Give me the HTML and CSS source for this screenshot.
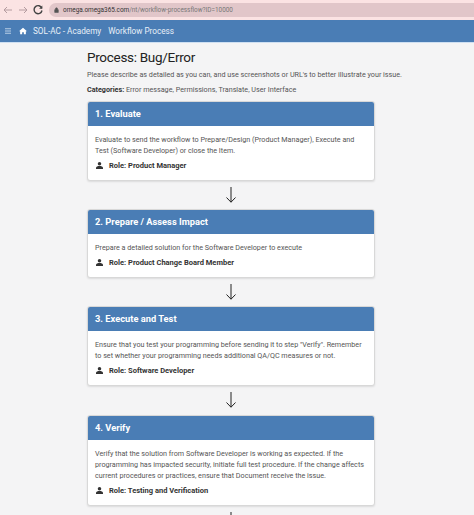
FILE: index.html
```html
<!DOCTYPE html>
<html lang="en">
<head>
    <meta charset="UTF-8">
    <meta name="viewport" content="width=device-width, initial-scale=1.0">
    <title>Workflow Process</title>
    <link rel="stylesheet" href="styles.css">
</head>
<body>

    <div class="browser-bar">
        <svg class="browser-icon" viewBox="0 0 12 12"><path d="M10 6H2M5 3 2 6l3 3" stroke="#b49ca0"/></svg>
        <svg class="browser-icon" viewBox="0 0 12 12"><path d="M2 6h8M7 3l3 3-3 3" stroke="#b49ca0"/></svg>
        <svg class="browser-icon" viewBox="0 0 12 12"><path d="M9.800 4.200A4 4 0 1 0 10 6.500" stroke="#444" stroke-width="1.400"/><path d="M10.300 1.500v3.200H7.100z" fill="#444"/></svg>
        <div class="url-pill">
            <svg class="lock" viewBox="0 0 8 10"><path d="M1 4.500h6V9H1zM2.300 4.500V3a1.700 1.700 0 0 1 3.400 0v1.500" fill="#555" stroke="#555"/></svg>
            <span class="url-host">omega.omega365.com</span><span class="url-path">/nt/workflow-processflow?ID=10000</span>
        </div>
    </div>

    <div class="navbar">
        <svg class="nav-menu" viewBox="0 0 8 8"><path d="M0 1h8M0 4h8M0 7h8" stroke="#dce8f5"/></svg>
        <svg class="nav-home" viewBox="0 0 12 11"><path d="M6 .5 0 6h1.700v4.500h3V7.500h2.600v3h3V6H12z" fill="#fff"/></svg>
        <span class="nav-link">SOL-AC - Academy</span>
        <span class="nav-link">Workflow Process</span>
    </div>

    <div class="content">
        <h1>Process: Bug/Error</h1>
        <p class="intro">Please describe as detailed as you can, and use screenshots or URL's to better illustrate your issue.</p>
        <p class="categories"><b>Categories:</b> Error message, Permissions, Translate, User Interface</p>

        <div class="step step-1">
            <div class="step-header">1. Evaluate</div>
            <div class="step-body">
                <p>Evaluate to send the workflow to Prepare/Design (Product Manager), Execute and Test (Software Developer) or close the Item.</p>
                <div class="role">
                    <svg class="role-icon" viewBox="0 0 8 8"><circle cx="4" cy="2" r="2" fill="#333"/><path d="M0 8V6.500C0 5 2 4.500 4 4.500s4 .5 4 2V8z" fill="#333"/></svg>
                    Role: Product Manager
                </div>
            </div>
        </div>
        <svg class="arrow" viewBox="0 0 10 16"><path d="M5 0v15.200M.5 10.500 5 15.200l4.500-4.700" stroke="#222" fill="none"/></svg>

        <div class="step step-2">
            <div class="step-header">2. Prepare / Assess Impact</div>
            <div class="step-body">
                <p>Prepare a detailed solution for the Software Developer to execute</p>
                <div class="role">
                    <svg class="role-icon" viewBox="0 0 8 8"><circle cx="4" cy="2" r="2" fill="#333"/><path d="M0 8V6.500C0 5 2 4.500 4 4.500s4 .5 4 2V8z" fill="#333"/></svg>
                    Role: Product Change Board Member
                </div>
            </div>
        </div>
        <svg class="arrow" viewBox="0 0 10 16"><path d="M5 0v15.200M.5 10.500 5 15.200l4.500-4.700" stroke="#222" fill="none"/></svg>

        <div class="step step-3">
            <div class="step-header">3. Execute and Test</div>
            <div class="step-body">
                <p>Ensure that you test your programming before sending it to step "Verify". Remember to set whether your programming needs additional QA/QC measures or not.</p>
                <div class="role">
                    <svg class="role-icon" viewBox="0 0 8 8"><circle cx="4" cy="2" r="2" fill="#333"/><path d="M0 8V6.500C0 5 2 4.500 4 4.500s4 .5 4 2V8z" fill="#333"/></svg>
                    Role: Software Developer
                </div>
            </div>
        </div>
        <svg class="arrow" viewBox="0 0 10 16"><path d="M5 0v15.200M.5 10.500 5 15.200l4.500-4.700" stroke="#222" fill="none"/></svg>

        <div class="step step-4">
            <div class="step-header">4. Verify</div>
            <div class="step-body">
                <p>Verify that the solution from Software Developer is working as expected. If the programming has impacted security, initiate full test procedure. If the change affects current procedures or practices, ensure that Document receive the issue.</p>
                <div class="role">
                    <svg class="role-icon" viewBox="0 0 8 8"><circle cx="4" cy="2" r="2" fill="#333"/><path d="M0 8V6.500C0 5 2 4.500 4 4.500s4 .5 4 2V8z" fill="#333"/></svg>
                    Role: Testing and Verification
                </div>
            </div>
        </div>
        <svg class="arrow" viewBox="0 0 10 16"><path d="M5 0v15.200M.5 10.500 5 15.200l4.500-4.700" stroke="#222" fill="none"/></svg>
    </div>

</body>
</html>
```

FILE: styles.css
```css
html, body {
    height: 515px;
    overflow: hidden;
}

body {
    font-family: Roboto, "Noto Sans", sans-serif;
    margin: 0;
    padding: 0;
    background-color: #f4f4f5;
    color: #555;
}

.browser-bar {
    display: flex;
    align-items: center;
    height: 20px;
    padding-left: 2px;
    gap: 3px;
    background-color: #fbe3e3;
    box-sizing: border-box;
}

.browser-icon {
    width: 12px;
    height: 12px;
    fill: none;
}

.url-pill {
    display: flex;
    align-items: center;
    flex: 1;
    height: 14px;
    margin-left: 2px;
    padding-left: 5px;
    border-radius: 7px 0 0 7px;
    background-color: #e1c6c9;
    font-size: 6.400px;
    white-space: nowrap;
}

.lock {
    width: 5px;
    height: 6px;
    margin-right: 4px;
}

.url-host {
    color: #333;
}

.url-path {
    color: #777;
}

.navbar {
    display: flex;
    align-items: center;
    height: 22px;
    padding-left: 5px;
    background-color: #4a7db5;
    border-bottom: 1px solid #cfe0f2;
    color: #e8f0f8;
    font-size: 8.200px;
}

.nav-menu {
    width: 6px;
    height: 6px;
    margin-right: 8px;
}

.nav-home {
    width: 8px;
    height: 8px;
    margin-right: 6px;
}

.nav-link {
    margin-right: 7px;
}

.content {
    width: 288px;
    margin-left: 87px;
}

h1 {
    margin: 4px 0 0;
    font-size: 13.500px;
    font-weight: 400;
    letter-spacing: -0.300px;
    line-height: 21px;
    color: #222;
}

.intro {
    margin: 1px 0 0;
    font-size: 7.200px;
    line-height: 12px;
    white-space: nowrap;
}

.categories {
    margin: 3px 0 0;
    font-size: 7.200px;
    line-height: 12px;
    white-space: nowrap;
}

.categories b {
    color: #333;
}

.step {
    background-color: #ffffff;
    border: 1px solid #d8d8d8;
    border-radius: 3px;
    box-shadow: 0 1px 2px rgba(0, 0, 0, 0.1);
    box-sizing: border-box;
    overflow: hidden;
}

.step-1 {
    margin-top: 5px;
}

.step-4 {
    margin-top: 7px;
}

.step-header {
    height: 24px;
    padding-left: 7px;
    background-color: #4a7db5;
    color: #fff;
    font-size: 9.300px;
    font-weight: 700;
    line-height: 23px;
}

.step-body {
    padding: 8px 7px 9px;
    font-size: 7.200px;
    line-height: 11px;
}

.step-body p {
    margin: 0;
}

.role {
    display: flex;
    align-items: center;
    gap: 6px;
    margin-top: 4px;
    padding-left: 1px;
    font-size: 7.500px;
    font-weight: 700;
    color: #333;
}

.role-icon {
    width: 7px;
    height: 7px;
}

.arrow {
    display: block;
    width: 10px;
    height: 16px;
    margin: 6px auto;
}
```
